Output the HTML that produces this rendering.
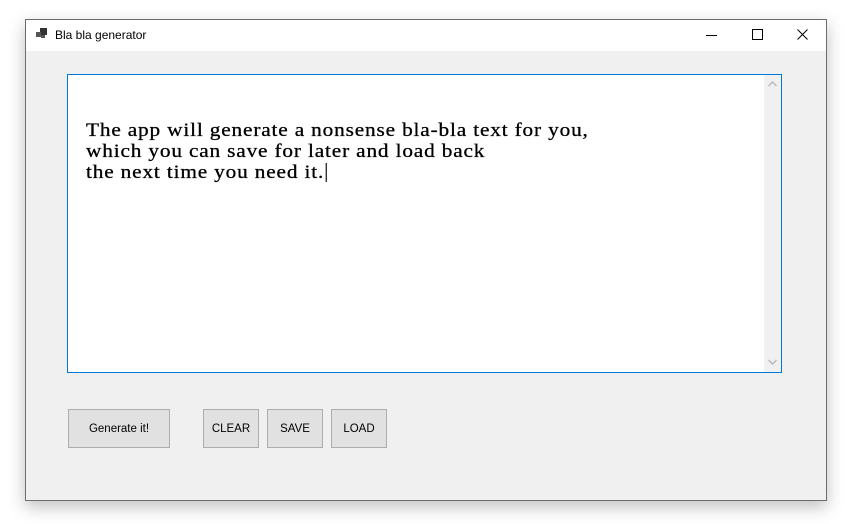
<!DOCTYPE html>
<html><head><meta charset="utf-8"><style>
*{margin:0;padding:0;box-sizing:border-box}
body{width:852px;height:524px;background:#fff;position:relative;overflow:hidden;font-family:"Liberation Sans",sans-serif}
.win{position:absolute;left:25px;top:19px;width:802px;height:482px;border:1px solid #6d6d6d;background:#f0f0f0;box-shadow:0 6px 16px rgba(0,0,0,.25)}
.title{position:absolute;left:0;top:0;width:800px;height:31px;background:#fff}
.title .t{position:absolute;left:29px;top:8px;font-size:12px;color:#000}
.tb{position:absolute;left:41px;top:54px;width:715px;height:299px;border:1px solid #0078d7;background:#fff}
.sb{position:absolute;right:0;top:0;width:17px;height:297px;background:#f0f0f0}
.txt{position:absolute;left:18px;top:45px;font-family:"Liberation Serif",serif;font-size:19px;line-height:21px;letter-spacing:0.75px;color:#000;white-space:pre;transform:scaleX(1.12);transform-origin:0 0;-webkit-text-stroke:0.3px #000}
.btn{position:absolute;top:389px;height:39px;border:1px solid #adadad;background:#e1e1e1;font-size:11.5px;display:flex;align-items:center;justify-content:center;color:#000}
</style></head><body>
<div class="win">
 <div class="title">
  <svg style="position:absolute;left:10px;top:8px" width="12" height="12"><rect x="4" y="0" width="7" height="7" fill="#333"/><rect x="0" y="4" width="5" height="5" fill="#555"/><rect x="5" y="7" width="4" height="3" fill="#555"/></svg>
  <div class="t">Bla bla generator</div>
  <svg style="position:absolute;left:680px;top:10px" width="12" height="12"><line x1="0" y1="5.5" x2="11" y2="5.5" stroke="#000"/></svg>
  <svg style="position:absolute;left:726px;top:9px" width="12" height="12"><rect x="0.5" y="0.5" width="10" height="10" fill="none" stroke="#000"/></svg>
  <svg style="position:absolute;left:771px;top:9px" width="12" height="12"><path d="M0.5 0.5L10.5 10.5M10.5 0.5L0.5 10.5" stroke="#000"/></svg>
 </div>
 <div class="tb">
  <div class="sb">
   <svg style="position:absolute;left:4px;top:6px" width="9" height="6"><path d="M0.5 5L4.5 1L8.5 5" stroke="#bbb" fill="none" stroke-width="1.5"/></svg>
   <svg style="position:absolute;left:4px;top:284px" width="9" height="6"><path d="M0.5 1L4.5 5L8.5 1" stroke="#bbb" fill="none" stroke-width="1.5"/></svg>
  </div>
  <div class="txt">The app will generate a nonsense bla-bla text for you,
which you can save for later and load back
the next time you need it.<span style="display:inline-block;width:1px;height:19px;background:#000;vertical-align:-4px;margin-left:1px"></span></div>
 </div>
 <div class="btn" style="left:42px;width:102px">Generate it!</div>
 <div class="btn" style="left:177px;width:56px">CLEAR</div>
 <div class="btn" style="left:241px;width:56px">SAVE</div>
 <div class="btn" style="left:305px;width:56px">LOAD</div>
</div>
</body></html>
